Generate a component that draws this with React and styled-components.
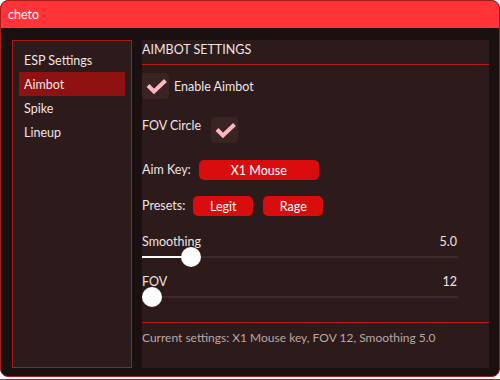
import React, { useState } from 'react';
import styled, { createGlobalStyle } from 'styled-components';

const GlobalStyle = createGlobalStyle`
  html, body {
    margin: 0;
    padding: 0;
    background: #ffffff;
  }
  body {
    font-family: Lato, "Noto Sans", "Liberation Sans", sans-serif;
    font-size: 12px;
  }
`;

const Frame = styled.div`
  width: 500px;
  height: 380px;
  box-sizing: border-box;
  border-bottom: 1px solid #c21d1d;
`;

const Window = styled.div`
  width: 500px;
  height: 377px;
  box-sizing: border-box;
  display: flex;
  flex-direction: column;
  background: #1b1010;
  border: 1px solid #a81b1b;
  border-radius: 8px;
  overflow: hidden;
`;

const TitleBar = styled.div`
  height: 27px;
  flex: none;
  display: flex;
  align-items: center;
  padding-left: 7px;
  background: #ff3338;
  color: #ffffff;
  font-size: 12.5px;
`;

const Body = styled.div`
  flex: 1;
  display: flex;
  gap: 10px;
  padding: 12px 10px 8px 11px;
  min-height: 0;
`;

const Sidebar = styled.nav`
  width: 120px;
  box-sizing: border-box;
  background: #2d1a1a;
  border: 1px solid #a81b1b;
  padding: 7px 6px;
  display: flex;
  flex-direction: column;
`;

const NavItem = styled.div`
  height: 24px;
  display: flex;
  align-items: center;
  padding-left: 5px;
  color: #f1e4e4;
  font-size: 12.5px;
  background: ${(p) => (p.$active ? '#8f1212' : 'transparent')};
  cursor: pointer;
`;

const Panel = styled.section`
  flex: 1;
  background: #2d1a1a;
  display: flex;
  flex-direction: column;
`;

const Header = styled.div`
  padding: 2px 0 6px;
  line-height: 16px;
  font-size: 12.5px;
  color: #f1e4e4;
  border-bottom: 1px solid #b31c1c;
`;

const Content = styled.div`
  display: flex;
  flex-direction: column;
  padding-top: 8px;
`;

const Row = styled.div`
  display: flex;
  align-items: ${(p) => p.$align || 'center'};
  gap: ${(p) => p.$gap || 10}px;
  margin-top: ${(p) => p.$mt || 0}px;
  color: #f1e4e4;
  font-size: 12.5px;
  line-height: 16px;
`;

const Label = styled.span`
  padding-top: ${(p) => p.$pt || 0}px;
`;

const ButtonGroup = styled.div`
  display: flex;
  gap: 10px;
`;

const CheckBox = styled.div`
  width: 27px;
  height: 26px;
  border-radius: 4px;
  background: #3a2323;
  display: flex;
  align-items: center;
  justify-content: center;
  cursor: pointer;
`;

const Button = styled.button`
  width: ${(p) => p.$w}px;
  height: 20px;
  border: none;
  border-radius: 5px;
  background: #d90d0d;
  color: #ffffff;
  font-family: inherit;
  font-size: 12.5px;
  padding: 0;
  cursor: pointer;
`;

const SliderBlock = styled.div`
  width: 316px;
  margin-top: ${(p) => p.$mt}px;
  display: flex;
  flex-direction: column;
`;

const SliderLabel = styled.div`
  display: flex;
  justify-content: space-between;
  line-height: 14px;
  font-size: 12.5px;
  color: #f1e4e4;
  padding-right: 1px;
`;

const Track = styled.div`
  position: relative;
  height: 20px;
  margin-top: -2px;
  &::before {
    content: '';
    position: absolute;
    left: 0;
    right: 0;
    top: 9px;
    height: 2px;
    background: #3e2828;
  }
`;

const Fill = styled.div`
  position: absolute;
  left: 0;
  top: 9px;
  height: 2px;
  background: #ffffff;
`;

const Knob = styled.div`
  position: absolute;
  top: 0;
  width: 20px;
  height: 20px;
  margin-left: -10px;
  border-radius: 50%;
  background: #ffffff;
`;

const Divider = styled.div`
  height: 1px;
  background: #b31c1c;
  margin-top: 15px;
`;

const Footer = styled.div`
  margin-top: 7px;
  line-height: 16px;
  color: #b7a9a9;
`;

const Check = () => (
  <svg width="26" height="26" viewBox="0 0 26 26">
    <polyline
      points="5,12.5 11,18.5 22.5,7.5"
      fill="none"
      stroke="#ffb6c0"
      strokeWidth="4"
    />
  </svg>
);

const Slider = ({ label, value, display, min, max, mt }) => {
  const frac = (value - min) / (max - min);
  const pos = 10 + frac * 296;
  return (
    <SliderBlock $mt={mt}>
      <SliderLabel>
        <span>{label}</span>
        <span>{display}</span>
      </SliderLabel>
      <Track>
        <Fill style={{ width: pos }} />
        <Knob style={{ left: pos }} />
      </Track>
    </SliderBlock>
  );
};

const tabs = ['ESP Settings', 'Aimbot', 'Spike', 'Lineup'];

export default function App() {
  const [tab, setTab] = useState('Aimbot');
  return (
    <>
      <GlobalStyle />
      <Frame>
        <Window>
          <TitleBar>cheto</TitleBar>
          <Body>
            <Sidebar>
              {tabs.map((t) => (
                <NavItem key={t} $active={t === tab} onClick={() => setTab(t)}>
                  {t}
                </NavItem>
              ))}
            </Sidebar>
            <Panel>
              <Header>AIMBOT SETTINGS</Header>
              <Content>
                <Row $gap={5}>
                  <CheckBox>
                    <Check />
                  </CheckBox>
                  <Label $pt={1}>Enable Aimbot</Label>
                </Row>
                <Row $align="flex-start" $mt={18}>
                  <Label $pt={1}>FOV Circle</Label>
                  <CheckBox>
                    <Check />
                  </CheckBox>
                </Row>
                <Row $mt={17} $gap={8}>
                  <Label>Aim Key:</Label>
                  <Button $w={120}>X1 Mouse</Button>
                </Row>
                <Row $mt={16} $gap={8}>
                  <Label>Presets:</Label>
                  <ButtonGroup>
                    <Button $w={60}>Legit</Button>
                    <Button $w={60}>Rage</Button>
                  </ButtonGroup>
                </Row>
                <Slider label="Smoothing" value={5} display="5.0" min={1} max={31} mt={19} />
                <Slider label="FOV" value={12} display="12" min={12} max={360} mt={8} />
                <Divider />
                <Footer>Current settings: X1 Mouse key, FOV 12, Smoothing 5.0</Footer>
              </Content>
            </Panel>
          </Body>
        </Window>
      </Frame>
    </>
  );
}
